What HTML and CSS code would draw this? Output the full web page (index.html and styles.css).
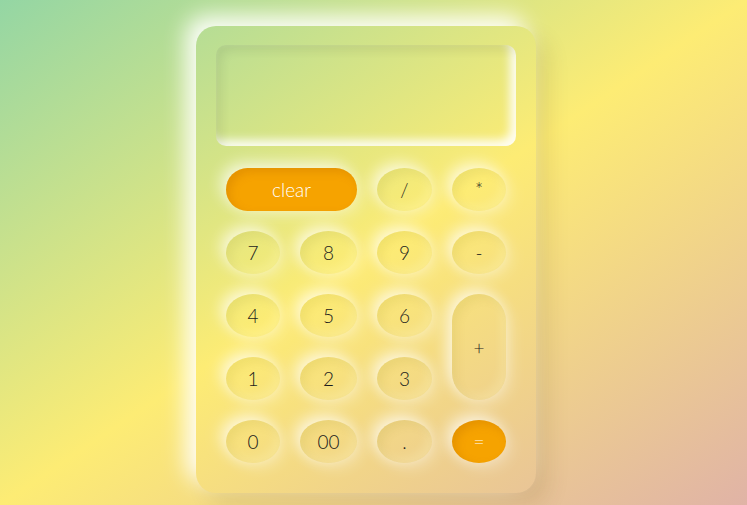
FILE: index.html
```html
<!DOCTYPE html>
<html lang="en">
<head>
<meta charset="utf-8">
<title>Calculator</title>
<link rel="stylesheet" href="styles.css">
</head>
<body>
<div class="calculator">
  <div class="display"></div>
  <div class="keys">
    <span class="key accent wide">clear</span>
    <span class="key">/</span>
    <span class="key">*</span>
    <span class="key">7</span>
    <span class="key">8</span>
    <span class="key">9</span>
    <span class="key">-</span>
    <span class="key">4</span>
    <span class="key">5</span>
    <span class="key">6</span>
    <span class="key tall">+</span>
    <span class="key">1</span>
    <span class="key">2</span>
    <span class="key">3</span>
    <span class="key">0</span>
    <span class="key">00</span>
    <span class="key">.</span>
    <span class="key accent">=</span>
  </div>
</div>
</body>
</html>
```
FILE: styles.css
```css
html, body {
  margin: 0;
  height: 100%;
}
body {
  background: linear-gradient(to bottom right, #94d6a4 0%, #fdec74 50%, #e0b3a6 100%);
  font-family: Lato, "Open Sans", sans-serif;
  overflow: hidden;
}
.calculator {
  box-sizing: border-box;
  width: 340px;
  height: 467px;
  margin: 26px 0 0 196px;
  padding: 19px 20px 30px;
  border-radius: 20px;
  box-shadow: -10px -10px 22px rgba(255,255,255,0.95), 12px 12px 22px rgba(80,60,0,0.12);
}
.display {
  height: 101px;
  border-radius: 10px;
  box-shadow: inset 6px 6px 10px rgba(0,0,0,0.07), inset -6px -6px 10px rgba(255,255,255,0.9);
  margin-bottom: 22px;
}
.keys {
  display: grid;
  grid-template-columns: 54px 57px 55px 54px;
  grid-auto-rows: 43px;
  gap: 20px;
  padding: 0 10px;
}
.key {
  display: flex;
  align-items: center;
  justify-content: center;
  border-radius: 50%;
  font-size: 19px;
  font-weight: 300;
  color: #1c1c1c;
  box-shadow: -5px -5px 15px rgba(255,255,255,0.7), 5px 5px 15px rgba(255,255,255,0.3), inset 5px 5px 10px rgba(120,100,0,0.08), inset -5px -5px 10px rgba(255,255,210,0.2);
}
.wide {
  grid-column: span 2;
  border-radius: 22px;
}
.tall {
  grid-row: span 2;
  border-radius: 27px;
}
.accent {
  background: #f6a300;
  color: #fff;
  box-shadow: -5px -5px 15px rgba(255,255,255,0.7), 5px 5px 15px rgba(255,255,255,0.3), inset 4px 4px 8px rgba(180,100,0,0.25);
}
```
